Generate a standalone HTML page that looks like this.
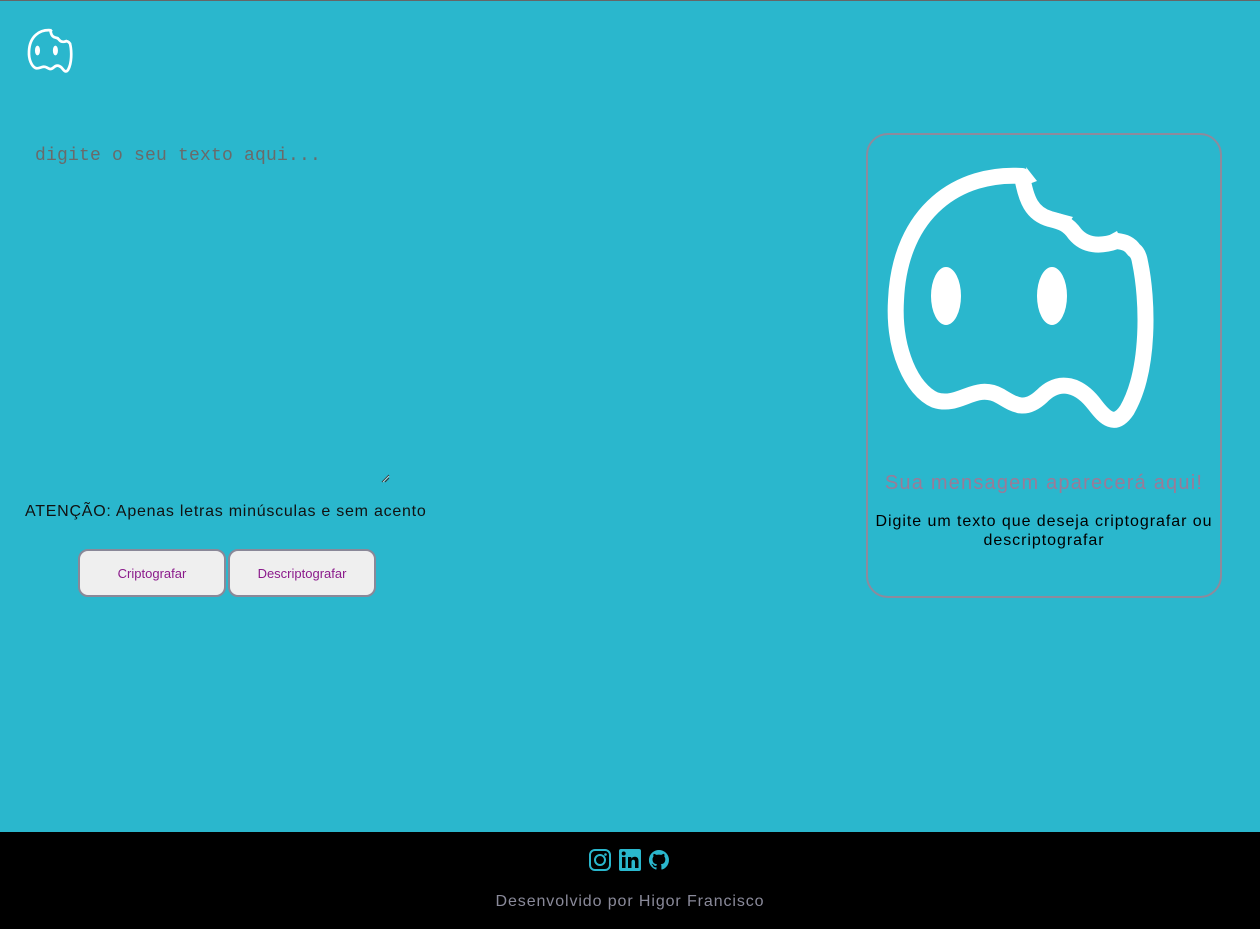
<!DOCTYPE html>
<html><head><meta charset="utf-8"><style>
*{margin:0;padding:0;box-sizing:border-box}
html,body{width:1260px;height:929px;overflow:hidden;background:#2ab7cd;font-family:"Liberation Sans",sans-serif}
.topline{position:absolute;left:0;top:0;width:1260px;height:1px;background:#666}
.abs{position:absolute}
.ph{left:35px;top:146px;font-family:"Liberation Mono","DejaVu Sans Mono",monospace;font-size:18px;color:#6a6a6a;letter-spacing:0.2px}
.warn{left:25px;top:503px;font-size:16px;color:#111;letter-spacing:0.75px}
.btn{top:549px;height:48px;width:148px;border:2px solid #8a8898;border-radius:10px;background:#efefef;color:#8b1a8b;font-size:13px;display:flex;align-items:center;justify-content:center}
.box{left:866px;top:133px;width:356px;height:465px;border:2px solid #8d8a9c;border-radius:22px}
.t1{left:868px;top:472px;width:352px;text-align:center;font-size:20px;color:#9a7b98;letter-spacing:1.2px;white-space:nowrap}
.t2{left:868px;top:512px;width:352px;text-align:center;font-size:16px;color:#000;line-height:19px;letter-spacing:0.95px}
.foot{left:0;top:832px;width:1260px;height:97px;background:#000}
.ft{left:0;top:893px;width:1260px;text-align:center;color:#8a8a9a;font-size:16px;letter-spacing:0.9px}
</style></head><body>
<div class="topline"></div>
<svg width="0" height="0" style="position:absolute"><defs>
<g id="g">
<path fill="none" stroke="#fff" stroke-width="16" stroke-linejoin="round" stroke-linecap="round" d="M1022,176 C960,172 900,210 896,300 C893,350 912,390 935,400 C960,408 975,382 1000,396 C1015,405 1025,412 1042,396 C1060,378 1080,385 1095,405 C1105,418 1115,428 1127,410 C1150,370 1148,300 1140,262 C1139,256 1137,252 1134,250 C1130,244 1125,242 1117,241 C1100,247 1085,246 1075,234 C1068,224 1062,222 1050,219 C1032,214 1026,200 1022,176"/>
<path fill="#fff" d="M1026,167 L1037,181 L1029,184 Z M1058,213 L1073,217 L1066,227 Z M1106,237 L1117,231 L1123,244 Z"/>
<ellipse cx="946" cy="296" rx="15" ry="29" fill="#fff"/><ellipse cx="1052" cy="296" rx="15" ry="29" fill="#fff"/>
</g></defs></svg>
<svg class="abs" style="left:27px;top:28px" width="46" height="46" viewBox="884 163 272 272"><use href="#g"/></svg>
<div class="abs ph">digite o seu texto aqui...</div>
<svg class="abs" style="left:380px;top:473px" width="10" height="10"><path d="M2,9 L9,2 M5,9 L9,5" stroke="#333" stroke-width="1"/><path d="M3,9 L9,3" stroke="#ddd" stroke-width="0.8"/></svg>
<div class="abs warn">ATENÇÃO: Apenas letras minúsculas e sem acento</div>
<div class="abs btn" style="left:78px">Criptografar</div>
<div class="abs btn" style="left:228px">Descriptografar</div>
<div class="abs box"></div>
<svg class="abs" style="left:0;top:0" width="1260" height="929"><use href="#g"/></svg>
<div class="abs t1">Sua mensagem aparecerá aqui!</div>
<div class="abs t2">Digite um texto que deseja criptografar ou<br>descriptografar</div>
<div class="abs foot"></div>
<svg class="abs" style="left:589px;top:849px" width="84" height="22" viewBox="0 0 84 22">
<rect x="1" y="1" width="20" height="20" rx="5" fill="none" stroke="#2ab7cd" stroke-width="2"/>
<circle cx="11" cy="11" r="5" fill="none" stroke="#2ab7cd" stroke-width="2"/>
<circle cx="16.5" cy="5.5" r="1.3" fill="#2ab7cd"/>
<rect x="30" y="0" width="22" height="22" rx="2" fill="#2ab7cd"/>
<rect x="33" y="8" width="3.5" height="11" fill="#000"/><circle cx="34.7" cy="4.5" r="2" fill="#000"/>
<path d="M39,8 h3.3 v1.6 c0.8,-1.3 2,-1.9 3.6,-1.9 c2.6,0 3.6,1.7 3.6,4.5 v6.8 h-3.5 v-6 c0,-1.5 -0.5,-2.3 -1.7,-2.3 c-1.3,0 -1.8,0.9 -1.8,2.3 v6 h-3.5z" fill="#000"/>
<path d="M70,1 a10,10 0 0 0 -3.2,19.5 c0.5,0.1 0.7,-0.2 0.7,-0.5 v-1.8 c-2.8,0.6 -3.4,-1.3 -3.4,-1.3 c-0.5,-1.2 -1.1,-1.5 -1.1,-1.5 c-0.9,-0.6 0.1,-0.6 0.1,-0.6 c1,0.1 1.5,1 1.5,1 c0.9,1.5 2.4,1.1 2.9,0.8 c0.1,-0.7 0.4,-1.1 0.6,-1.3 c-2.2,-0.3 -4.6,-1.1 -4.6,-5 c0,-1.1 0.4,-2 1,-2.7 c-0.1,-0.3 -0.4,-1.3 0.1,-2.7 c0,0 0.8,-0.3 2.8,1 a9.6,9.6 0 0 1 5,0 c1.9,-1.3 2.8,-1 2.8,-1 c0.5,1.4 0.2,2.4 0.1,2.7 c0.6,0.7 1,1.6 1,2.7 c0,3.9 -2.4,4.7 -4.6,5 c0.4,0.3 0.7,0.9 0.7,1.9 v2.8 c0,0.3 0.2,0.6 0.7,0.5 A10,10 0 0 0 70,1z" fill="#2ab7cd"/>
</svg>
<div class="abs ft">Desenvolvido por Higor Francisco</div>
</body></html>
